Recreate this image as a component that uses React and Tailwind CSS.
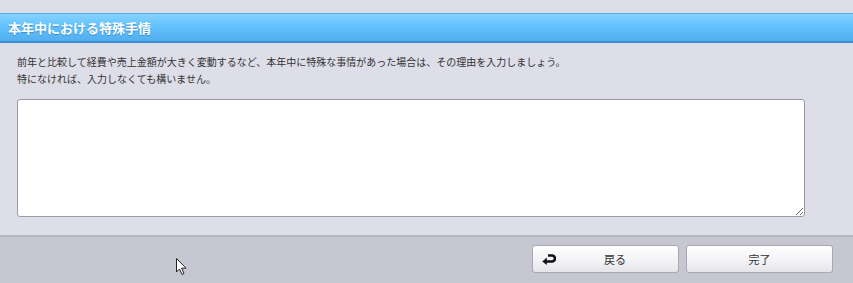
export default function App() {
  const font = { fontFamily: '"Noto Sans CJK JP", "Noto Sans", sans-serif' };
  return (
    <div className="w-[853px] h-[283px] bg-[#dedee8] flex flex-col overflow-hidden relative" style={font}>
      <div className="h-[13px] bg-[#dedee8]" />
      <div className="h-[30px] border-t border-[#5aaee6] border-b-2 border-b-[#3b8fd0] bg-[linear-gradient(to_bottom,#86d3ff,#62c2fd_45%,#52aef0)] flex items-center pl-[8px]">
        <span className="text-white font-bold text-[13px] leading-none [text-shadow:0_1px_1px_rgba(0,60,120,0.35)]">本年中における特殊手情</span>
      </div>
      <div className="flex-1 flex flex-col px-[17px] pt-[10px]">
        <p className="text-[10px] leading-[17px] text-[#333]">前年と比較して経費や売上金額が大きく変動するなど、本年中に特殊な事情があった場合は、その理由を入力しましょう。</p>
        <p className="text-[10px] leading-[17px] text-[#333]">特になければ、入力しなくても構いません。</p>
        <textarea className="mt-[12px] w-[788px] h-[118px] bg-white border border-[#9a9aa4] rounded-[3px] resize-y" />
      </div>
      <div className="h-[48px] border-t-2 border-[#b4b4bf] bg-[#c7c7d1] flex items-start justify-end pt-[8px] pr-[20px] gap-[7px]">
        <button className="w-[147px] h-[28px] rounded-[3px] border border-[#a8a8b2] bg-[linear-gradient(to_bottom,#ffffff,#f2f2f6_60%,#e4e4ea)] flex items-center relative text-[11px] text-[#333]">
          <svg className="absolute left-[9px]" width="14" height="11" viewBox="0 0 14 11">
            <path d="M6 1.5 H10 a3 3 0 0 1 0 6 H3" fill="none" stroke="#111" strokeWidth="2.6" />
            <path d="M0.3 7.5 L4.8 3.6 L4.8 11 Z" fill="#111" />
          </svg>
          <span className="flex-1 text-center pl-[19px]">戻る</span>
        </button>
        <button className="w-[147px] h-[28px] rounded-[3px] border border-[#a8a8b2] bg-[linear-gradient(to_bottom,#ffffff,#f2f2f6_60%,#e4e4ea)] flex items-center justify-center text-[11px] text-[#333]">
          完了
        </button>
      </div>
      <svg className="absolute left-[176px] top-[258px]" width="12" height="18" viewBox="0 0 12 18">
        <path d="M0.5 0.5 L0.5 14 L3.5 11 L6 16.5 L8 15.5 L5.6 10.2 L10 10.2 Z" fill="white" stroke="#222" strokeWidth="1" />
      </svg>
    </div>
  );
}
